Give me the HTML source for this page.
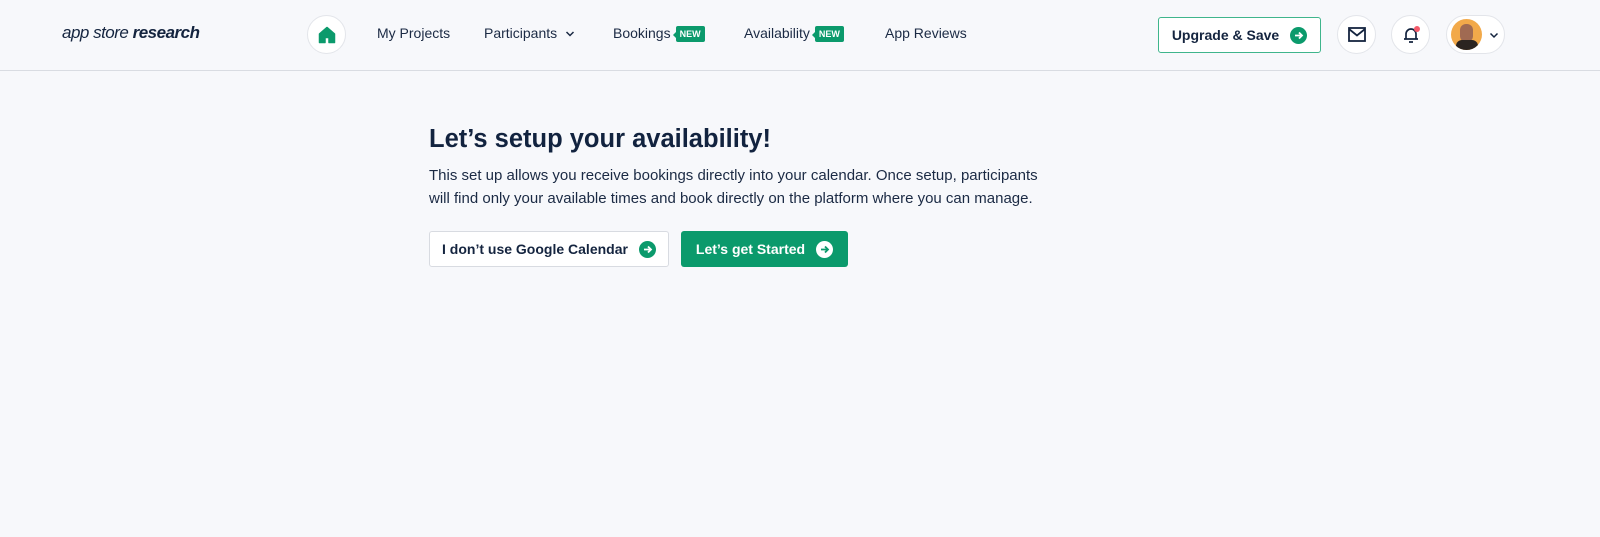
<!DOCTYPE html>
<html><head><style>
*{box-sizing:border-box;margin:0;padding:0}
body{width:1600px;height:537px;background:#f7f8fb;font-family:"Liberation Sans",sans-serif;color:#14243f;position:relative;overflow:hidden}
.hdr{position:absolute;left:0;top:0;width:1600px;height:71px;border-bottom:1px solid #d9dce2}
.abs{position:absolute}
.logo{left:62px;top:23px;font-size:17px;font-style:italic;letter-spacing:-0.5px}
.circ{border-radius:50%;background:#fff;border:1px solid #e3e5ea}
.nav{top:25px;font-size:14px;color:#1b2a44}
.new{display:inline-block;background:#0b9a6c;color:#fff;font-size:9px;font-weight:bold;padding:3px 4px;border-radius:2px;vertical-align:1px;margin-left:5px;position:relative}
.new:before{content:"";position:absolute;left:-3px;top:6px;border:3px solid transparent;border-right-color:#0b9a6c;border-left:0}
.dot{display:inline-block;width:17px;height:17px;border-radius:50%;background:#0b9a6c;position:relative;vertical-align:-3px}
.dot svg{position:absolute;left:3px;top:3px}
.btn{height:36px;border-radius:3px;font-size:14px;font-weight:bold;display:flex;align-items:center;justify-content:center;gap:11px}
</style></head><body>
<div class="hdr"></div>
<div class="abs logo">app store <b>research</b></div>
<div class="abs circ" style="left:307px;top:15px;width:39px;height:39px">
<svg class="abs" style="left:10px;top:10px" width="18" height="18" viewBox="0 0 18 18"><path d="M9 1.5 L16.5 8 V16.5 H11 V11.5 H7 V16.5 H1.5 V8 Z" fill="#0b9a6c" stroke="#0b9a6c" stroke-linejoin="round" stroke-width="1.5"/></svg></div>
<div class="abs nav" style="left:377px">My Projects</div>
<div class="abs nav" style="left:484px">Participants <svg width="10" height="8" viewBox="0 0 10 8" style="margin-left:4px"><path d="M1.5 2 L5 5.5 L8.5 2" fill="none" stroke="#1b2a44" stroke-width="1.5"/></svg></div>
<div class="abs nav" style="left:613px;top:25px">Bookings<span class="new">NEW</span></div>
<div class="abs nav" style="left:744px;top:25px">Availability<span class="new">NEW</span></div>
<div class="abs nav" style="left:885px">App Reviews</div>
<div class="abs btn" style="left:1158px;top:17px;width:163px;border:1.5px solid #3fb58c;background:#fff;color:#14243f">Upgrade &amp; Save <span class="dot"><svg width="11" height="11" viewBox="0 0 11 11"><path d="M2 5.5H9M6 2.5L9 5.5 6 8.5" fill="none" stroke="#fff" stroke-width="1.8"/></svg></span></div>
<div class="abs circ" style="left:1337px;top:15px;width:39px;height:39px"><svg class="abs" style="left:10px;top:11px" width="18" height="15" viewBox="0 0 18 15"><rect x="1" y="1" width="16" height="13" fill="none" stroke="#14243f" stroke-width="1.8"/><path d="M1 2 L9 8.5 L17 2" fill="none" stroke="#14243f" stroke-width="1.8"/></svg></div>
<div class="abs circ" style="left:1391px;top:15px;width:39px;height:39px"><svg class="abs" style="left:10px;top:9px" width="20" height="20" viewBox="0 0 20 20"><path d="M4 14 V9 A5 5 0 0 1 14 9 V14 H16 M2 14 H16 M7 17 H11" fill="none" stroke="#14243f" stroke-width="1.7"/><circle cx="15" cy="4" r="3" fill="#f45a6a"/></svg></div>
<div class="abs" style="left:1446px;top:15px;width:59px;height:39px;border-radius:20px;background:#fff;border:1px solid #e3e5ea">
<div class="abs" style="left:4px;top:3px;width:31px;height:31px;border-radius:50%;background:#f2a94a;overflow:hidden"><div class="abs" style="left:9px;top:5px;width:13px;height:18px;border-radius:6px;background:#a06a52"></div><div class="abs" style="left:5px;top:21px;width:22px;height:12px;border-radius:6px 6px 0 0;background:#2b2420"></div></div>
<svg class="abs" style="left:42px;top:16px" width="10" height="7" viewBox="0 0 10 7"><path d="M1.5 1.5 L5 5 L8.5 1.5" fill="none" stroke="#14243f" stroke-width="1.5"/></svg></div>

<div class="abs" style="left:429px;top:125px;font-size:25.5px;font-weight:bold;color:#12233f">Let’s setup your availability!</div>
<div class="abs" style="left:429px;top:164px;font-size:15px;line-height:23px;color:#1b2a44;width:640px">This set up allows you receive bookings directly into your calendar. Once setup, participants<br>will find only your available times and book directly on the platform where you can manage.</div>
<div class="abs btn" style="left:429px;top:231px;width:240px;background:#fff;border:1px solid #d8dbe1;color:#14243f">I don’t use Google Calendar <span class="dot"><svg width="11" height="11" viewBox="0 0 11 11"><path d="M2 5.5H9M6 2.5L9 5.5 6 8.5" fill="none" stroke="#fff" stroke-width="1.8"/></svg></span></div>
<div class="abs btn" style="left:681px;top:231px;width:167px;background:#0b9a6c;color:#fff;font-weight:bold">Let’s get Started <span class="dot" style="background:#fff"><svg width="11" height="11" viewBox="0 0 11 11"><path d="M2 5.5H9M6 2.5L9 5.5 6 8.5" fill="none" stroke="#0b9a6c" stroke-width="1.8"/></svg></span></div>
</body></html>
